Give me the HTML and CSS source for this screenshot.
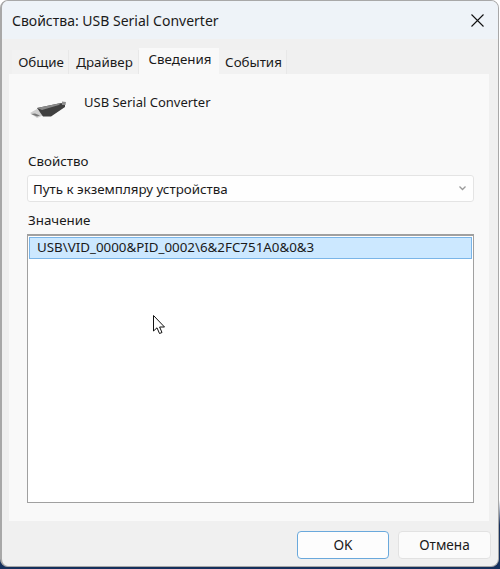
FILE: index.html
```html
<!DOCTYPE html>
<html lang="ru">
<head>
<meta charset="UTF-8" />
<title>Свойства: USB Serial Converter</title>
<link rel="stylesheet" href="styles.css">
</head>
<body>

<div class="dialog">
  <div class="titlebar">
    <span>Свойства: USB Serial Converter</span>
    <svg class="close" width="13" height="13" viewBox="0 0 13 13">
      <path d="M0.5 0.5 L12.5 12.5 M12.5 0.5 L0.5 12.5" stroke="#111" stroke-width="1.1" fill="none" />
    </svg>
  </div>

  <div class="tabs">
    <div class="tab tab-general">Общие</div>
    <div class="tab tab-driver">Драйвер</div>
    <div class="tab tab-active">Сведения</div>
    <div class="tab tab-events">События</div>
  </div>

  <div class="panel">
    <div class="device">
      <svg class="device-icon" width="40" height="24" viewBox="0 0 40 24">
        <defs>
          <filter id="soft"><feGaussianBlur stdDeviation="0.6" /></filter>
        </defs>
        <g filter="url(#soft)">
          <path d="M2 15 L9 11 L16 17 L9 20 Z" fill="#cfcfcf" />
          <path d="M3 16 L9 18.5 L12 17.5 L7 15.5 Z" fill="#777" />
          <path d="M9 10 L33 5 L37 6.5 L37 9 L23 18.5 L15 18.5 Z" fill="#3f3f3f" />
          <path d="M9 10 L33 5 L31 7 L14 12 Z" fill="#8a8a8a" />
          <path d="M34 3.5 L38 4 L37.5 7 L34 7 Z" fill="#8f8f8f" />
        </g>
      </svg>
      <div class="device-name">USB Serial Converter</div>
    </div>

    <div class="label label-prop">Свойство</div>
    <div class="select">
      <span>Путь к экземпляру устройства</span>
      <svg width="7" height="5" viewBox="0 0 7 5">
        <path d="M0.5 0.5 L3.5 3.5 L6.5 0.5" stroke="#9a9a9a" stroke-width="1.3" fill="none" />
      </svg>
    </div>

    <div class="label label-value">Значение</div>
    <div class="listbox">
      <div class="row-selected">USB\VID_0000&amp;PID_0002\6&amp;2FC751A0&amp;0&amp;3</div>
    </div>
  </div>

  <div class="footer">
    <button class="btn btn-default">OK</button>
    <button class="btn btn-cancel">Отмена</button>
  </div>

  <!-- mouse pointer -->
  <svg class="pointer" width="13" height="20" viewBox="0 0 13 20">
    <path d="M0.5 0.5 L0.5 16 L4 12.8 L6.5 18.5 L9 17.5 L6.6 12 L11.5 12 Z" fill="#fff" stroke="#111" stroke-width="1" />
  </svg>
</div>

</body>
</html>
```

FILE: styles.css
```css
html, body {
  height: 100%;
}
body {
  margin: 0;
  overflow: hidden;
  font-family: "Noto Sans", Arial, sans-serif;
  font-size: 13.35px;
  color: #1a1a1a;
  background: linear-gradient(#ffffff 0, #ffffff 500px, #16305c 525px);
}
.dialog {
  position: relative;
  box-sizing: border-box;
  width: 499px;
  height: 567px;
  border: 1px solid #a8a8a8;
  border-left-width: 2px;
  border-radius: 8px;
  background: #f0f0f0;
  overflow: hidden;
}

/* Title bar */
.titlebar {
  display: flex;
  align-items: center;
  justify-content: space-between;
  height: 38px;
  padding: 0 14px 0 10px;
  background: #eef3f8;
  font-size: 14px;
}
.close {
  display: block;
}

/* Tabs */
.tabs {
  display: flex;
  align-items: flex-end;
  height: 35px;
  padding-left: 10px;
}
.tab {
  box-sizing: border-box;
  height: 24px;
  padding: 3px 0 0 2px;
  text-align: center;
  background: #f2f2f2;
  border-right: 1px solid #e8e8e8;
}
.tab-general {
  width: 57px;
}
.tab-driver {
  width: 70px;
}
.tab-active {
  width: 80px;
  height: 26px;
  padding-top: 2px;
  background: #f9f9f9;
  border-right: none;
}
.tab-events {
  width: 68px;
}

/* Property page */
.panel {
  box-sizing: border-box;
  height: 447px;
  margin: 0 9px 0 7px;
  padding: 0 15px 0 18px;
  background: #f9f9f9;
}
.device {
  display: flex;
  height: 75px;
  padding-top: 24px;
  box-sizing: border-box;
}
.device-icon {
  display: block;
  margin: 0 16px 0 1px;
}
.device-name {
  font-size: 13px;
  line-height: 1;
  margin-top: -2px;
}
.label {
  line-height: 18px;
}
.label-prop {
  margin: 3px 0 5px 1px;
}
.label-value {
  margin: 9px 0 5px 1px;
}
.select {
  box-sizing: border-box;
  display: flex;
  align-items: center;
  justify-content: space-between;
  height: 27px;
  padding: 0 7px 0 5px;
  background: #fefefe;
  border: 1px solid #e4e4e4;
  border-radius: 3px;
}
.listbox {
  box-sizing: border-box;
  height: 269px;
  padding: 1px;
  background: #fff;
  border: 1px solid #a0a0a0;
  border-top-width: 2px;
}
.row-selected {
  box-sizing: border-box;
  height: 22px;
  line-height: 19px;
  padding-left: 7px;
  background: #cce8ff;
  border: 1px solid #7ab5e8;
}

/* Buttons */
.footer {
  display: flex;
  justify-content: flex-end;
  gap: 9px;
  padding: 10px 7px 0 0;
}
.btn {
  box-sizing: border-box;
  width: 92px;
  height: 28px;
  padding: 0 0 2px;
  font: inherit;
  font-size: 13.6px;
  color: #1a1a1a;
  background: #fbfbfb;
  border: 1px solid #e2e2e2;
  border-radius: 4px;
}
.btn-default {
  background: #fdfdfd;
  border-color: #6aa9dc;
}
.btn-cancel {
  width: 93px;
}

.pointer {
  position: absolute;
  left: 151px;
  top: 314px;
}
```
